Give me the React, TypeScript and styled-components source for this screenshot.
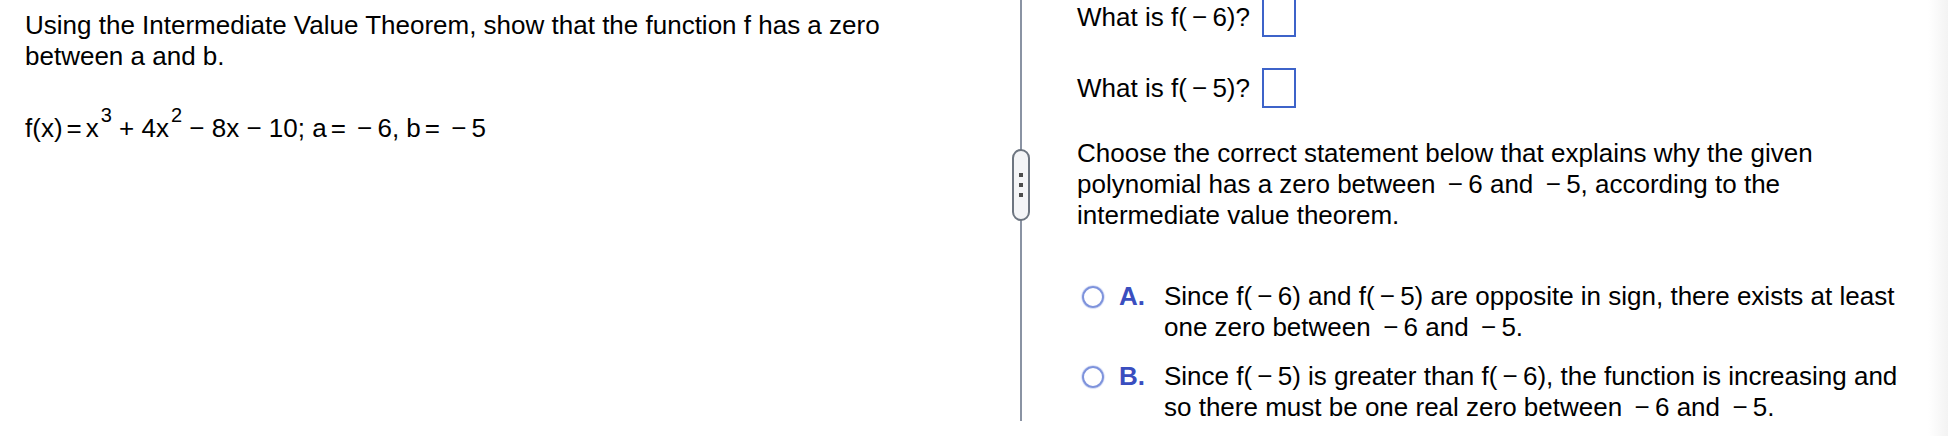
import styled, { createGlobalStyle } from "styled-components";

const GlobalStyle = createGlobalStyle`
  html, body {
    margin: 0;
    padding: 0;
    background: #fff;
  }
  body {
    font-family: "Liberation Sans", Arial, Helvetica, sans-serif;
    color: #000;
    overflow: hidden;
  }
`;

// thin space used around minus signs, as the math renderer does
const T = "\u2009";
const neg = (n: number) => `${T}−${T}${n}`;

const options = [
  {
    letter: "A.",
    text: `Since f(${neg(6)}) and f(${neg(5)}) are opposite in sign, there exists at least one zero between ${neg(6)} and ${neg(5)}.`,
  },
  {
    letter: "B.",
    text: `Since f(${neg(5)}) is greater than f(${neg(6)}), the function is increasing and so there must be one real zero between ${neg(6)} and ${neg(5)}.`,
  },
];

export default function App() {
  return (
    <>
      <GlobalStyle />
      <Page>
        <LeftPane>
          <Prompt>
            Using the Intermediate Value Theorem, show that the function f has a zero
            between a and b.
          </Prompt>
          <Formula>
            f(x)<Eq>=</Eq>x<Sup>3</Sup>
            {" + 4x"}
            <Sup>2</Sup>
            {" − 8x − 10; a"}
            <Eq>=</Eq>
            {` −${T}6, b`}
            <Eq>=</Eq>
            {` −${T}5`}
          </Formula>
        </LeftPane>

        <Divider>
          <Handle>
            <Dot />
            <Dot />
            <Dot />
          </Handle>
        </Divider>

        <RightPane>
          <AnswerRow $first>
            <span>{`What is f(${neg(6)})?`}</span>
            <AnswerBox />
          </AnswerRow>
          <AnswerRow>
            <span>{`What is f(${neg(5)})?`}</span>
            <AnswerBox />
          </AnswerRow>

          <Question>
            {`Choose the correct statement below that explains why the given polynomial has a zero between ${neg(6)} and ${neg(5)}, according to the intermediate value theorem.`}
          </Question>

          <Options>
            {options.map((o) => (
              <Option key={o.letter}>
                <Radio />
                <Letter>{o.letter}</Letter>
                <OptionText>{o.text}</OptionText>
              </Option>
            ))}
          </Options>
        </RightPane>
      </Page>
    </>
  );
}

const Page = styled.div`
  display: flex;
  align-items: flex-start;
  width: 1948px;
  height: 436px;
  font-size: 26px;
  line-height: 31px;
  background: linear-gradient(to right, #fff 1928px, #f3f3f3 1948px);
`;

const LeftPane = styled.div`
  width: 1020px;
  box-sizing: border-box;
  padding: 10px 100px 0 25px;
`;

const Prompt = styled.p`
  margin: 0;
`;

const Formula = styled.p`
  margin: 41px 0 0;
  white-space: nowrap;
`;

const Eq = styled.span`
  margin: 0 4px;
`;

const Sup = styled.span`
  font-size: 20px;
  line-height: 0;
  vertical-align: 15px;
  margin-left: 2px;
`;

const Divider = styled.div`
  position: relative;
  width: 2px;
  height: 421px;
  flex-shrink: 0;
  background: #8a93a3;
`;

const Handle = styled.div`
  position: absolute;
  top: 149px;
  left: -8px;
  width: 18px;
  height: 72px;
  box-sizing: border-box;
  border: 2px solid #6d7580;
  border-radius: 9px;
  background: #f4f5f7;
  display: flex;
  flex-direction: column;
  align-items: center;
  justify-content: center;
  gap: 6px;
`;

const Dot = styled.span`
  width: 4px;
  height: 4px;
  background: #4d4d4d;
`;

const RightPane = styled.div`
  flex: 1;
  box-sizing: border-box;
  padding: 0 33px 0 55px;
`;

const AnswerRow = styled.div<{ $first?: boolean }>`
  display: flex;
  align-items: center;
  gap: 12px;
  margin-top: ${(p) => (p.$first ? "-3px" : "31px")};
`;

const AnswerBox = styled.span`
  display: inline-block;
  width: 34px;
  height: 40px;
  box-sizing: border-box;
  border: 2px solid #3d63c9;
`;

const Question = styled.p`
  margin: 30px 0 0;
`;

const Options = styled.div`
  margin-top: 50px;
  display: flex;
  flex-direction: column;
  gap: 18px;
`;

const Option = styled.div`
  display: flex;
  align-items: flex-start;
`;

const Radio = styled.span`
  flex-shrink: 0;
  width: 22px;
  height: 22px;
  margin: 5px 15px 0 5px;
  box-sizing: border-box;
  border: 2px solid #7e93dc;
  border-radius: 50%;
  box-shadow: 0 0 1px 0.5px rgba(140, 160, 230, 0.6);
`;

const Letter = styled.span`
  flex-shrink: 0;
  width: 45px;
  font-weight: 700;
  color: #3a4ebf;
`;

const OptionText = styled.span`
  flex: 1;
`;
